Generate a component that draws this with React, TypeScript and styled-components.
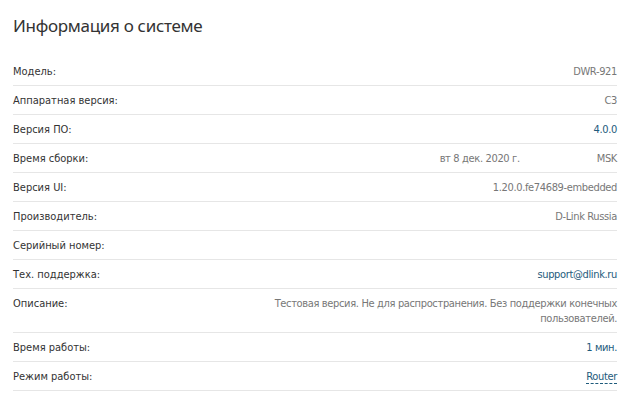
import styled, { createGlobalStyle } from "styled-components"

const GlobalStyle = createGlobalStyle`
  html, body {
    margin: 0;
    padding: 0;
    background: #ffffff;
  }
  body {
    font-family: "DejaVu Sans Condensed", "DejaVu Sans", sans-serif;
  }
`

type Row = {
  label: string
  value?: string
  tone?: 'gray' | 'blue' | 'link'
  extra?: string
}

const rows: Row[] = [
  { label: 'Модель:', value: 'DWR-921' },
  { label: 'Аппаратная версия:', value: 'C3' },
  { label: 'Версия ПО:', value: '4.0.0', tone: 'blue' },
  { label: 'Время сборки:', value: 'вт 8 дек. 2020 г.', extra: 'MSK' },
  { label: 'Версия UI:', value: '1.20.0.fe74689-embedded' },
  { label: 'Производитель:', value: 'D-Link Russia' },
  { label: 'Серийный номер:' },
  { label: 'Тех. поддержка:', value: 'support@dlink.ru', tone: 'blue' },
  { label: 'Описание:', value: 'Тестовая версия. Не для распространения. Без поддержки конечных пользователей.' },
  { label: 'Время работы:', value: '1 мин.', tone: 'blue' },
  { label: 'Режим работы:', value: 'Router', tone: 'link' },
]

export default function App() {
  return (
    <Page>
      <GlobalStyle />
      <Title>Информация о системе</Title>
      <InfoList>
        {rows.map((row) => (
          <InfoRow key={row.label}>
            <Label>{row.label}</Label>
            {row.extra ? (
              <BuildTime>
                <Value>{row.value}</Value>
                <Value>{row.extra}</Value>
              </BuildTime>
            ) : row.tone === 'link' ? (
              <ModeLink>{row.value}</ModeLink>
            ) : (
              <Value $tone={row.tone}>{row.value}</Value>
            )}
          </InfoRow>
        ))}
      </InfoList>
    </Page>
  )
}

const Page = styled.div`
  width: 604px;
  padding: 0 14px 0 13px;
`
const Title = styled.h1`
  margin: 0;
  height: 57px;
  padding-top: 14px;
  box-sizing: border-box;
  font-family: "Noto Sans", "Open Sans", sans-serif;
  font-size: 17px;
  font-weight: 400;
  letter-spacing: -0.3px;
  color: #333333;
`
const InfoList = styled.div`
  display: flex;
  flex-direction: column;
`
const InfoRow = styled.div`
  display: flex;
  justify-content: space-between;
  align-items: flex-start;
  gap: 40px;
  padding: 7px 0 6px;
  min-height: 15px;
  border-bottom: 1px solid #e6e6e6;
  font-size: 11px;
  line-height: 15px;
`
const Label = styled.div`
  color: #333333;
  white-space: nowrap;
`
const Value = styled.div<{ $tone?: 'gray' | 'blue' }>`
  color: ${(p) => (p.$tone === 'blue' ? '#1e5b7c' : '#777777')};
  text-align: right;
  max-width: 352px;
  letter-spacing: -0.35px;
`
const BuildTime = styled.div`
  display: flex;
  gap: 77px;
`
const ModeLink = styled.a`
  color: #1e5b7c;
  text-decoration: none;
  border-bottom: 1px dashed #1e5b7c;
  line-height: 13px;
  margin-top: 1px;
  letter-spacing: -0.35px;
`
